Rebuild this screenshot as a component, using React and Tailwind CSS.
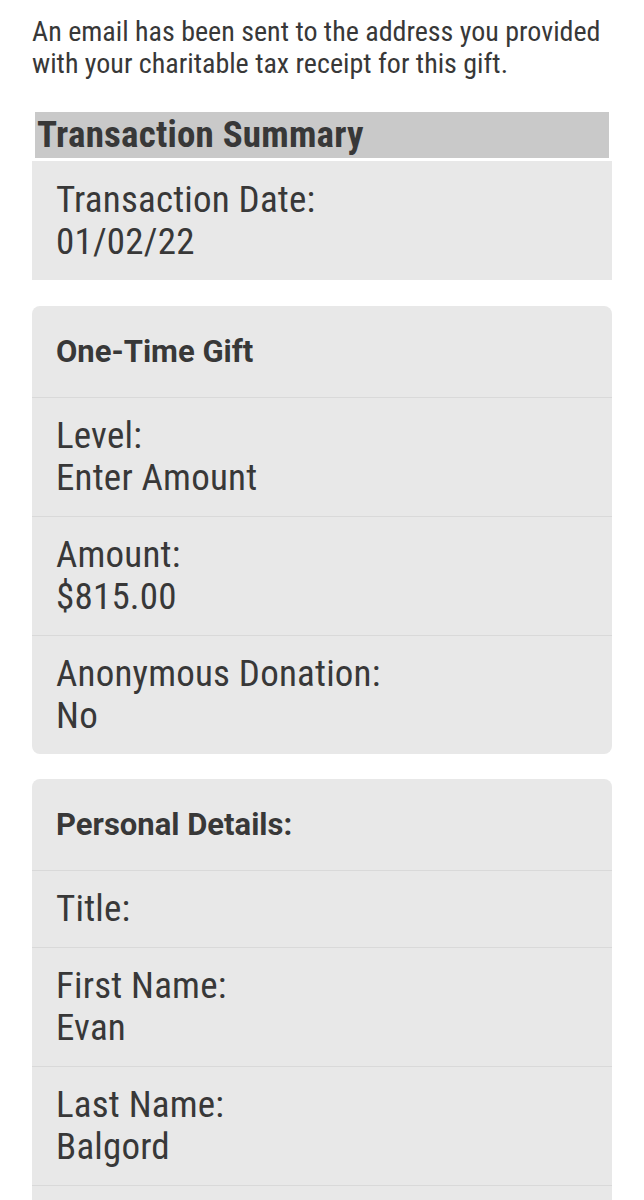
const rows1 = [
  { label: 'Level:', value: 'Enter Amount' },
  { label: 'Amount:', value: '$815.00' },
  { label: 'Anonymous Donation:', value: 'No' },
];

const rows2 = [
  { label: 'Title:', value: '' },
  { label: 'First Name:', value: 'Evan' },
  { label: 'Last Name:', value: 'Balgord' },
  { label: '', value: '' },
];

function Row({ label, value }) {
  return (
    <div className="border-t border-[#d9d9d9] px-6 py-[17px] text-[37px] leading-[42px] tracking-[0.2px] font-stretch-condensed min-h-[77px]">
      {label && <div>{label}</div>}
      {value && <div>{value}</div>}
    </div>
  );
}

function Card({ title, rows }) {
  return (
    <div className="rounded-lg bg-[#e8e8e8] overflow-hidden">
      <div className="h-[91px] px-6 flex items-center font-['Roboto',sans-serif] font-stretch-normal text-[31px] leading-[36px] font-bold">
        {title}
      </div>
      {rows.map((r, i) => (
        <Row key={i} label={r.label} value={r.value} />
      ))}
    </div>
  );
}

export default function App() {
  return (
    <div className="h-[1200px] overflow-hidden bg-white px-8 pt-[16px] text-[#383838] font-['Roboto_Condensed','Roboto',sans-serif]">
      <p className="text-[28px] leading-[32px] font-stretch-condensed">
        An email has been sent to the address you provided with your charitable tax receipt for this gift.
      </p>

      <div className="mt-[32px] mx-[3px] bg-[#c9c9c9] px-[2px] h-[46px] flex items-center text-[37px] leading-[46px] tracking-[0.2px] font-bold font-stretch-condensed">
        Transaction Summary
      </div>
      <div className="mt-[3px] bg-[#e8e8e8] px-6 pt-[18px] pb-[17px] text-[37px] leading-[42px] tracking-[0.2px] font-stretch-condensed">
        <div>Transaction Date:</div>
        <div>01/02/22</div>
      </div>

      <div className="mt-[26px]">
        <Card title="One-Time Gift" rows={rows1} />
      </div>
      <div className="mt-[25px]">
        <Card title="Personal Details:" rows={rows2} />
      </div>
    </div>
  );
}
